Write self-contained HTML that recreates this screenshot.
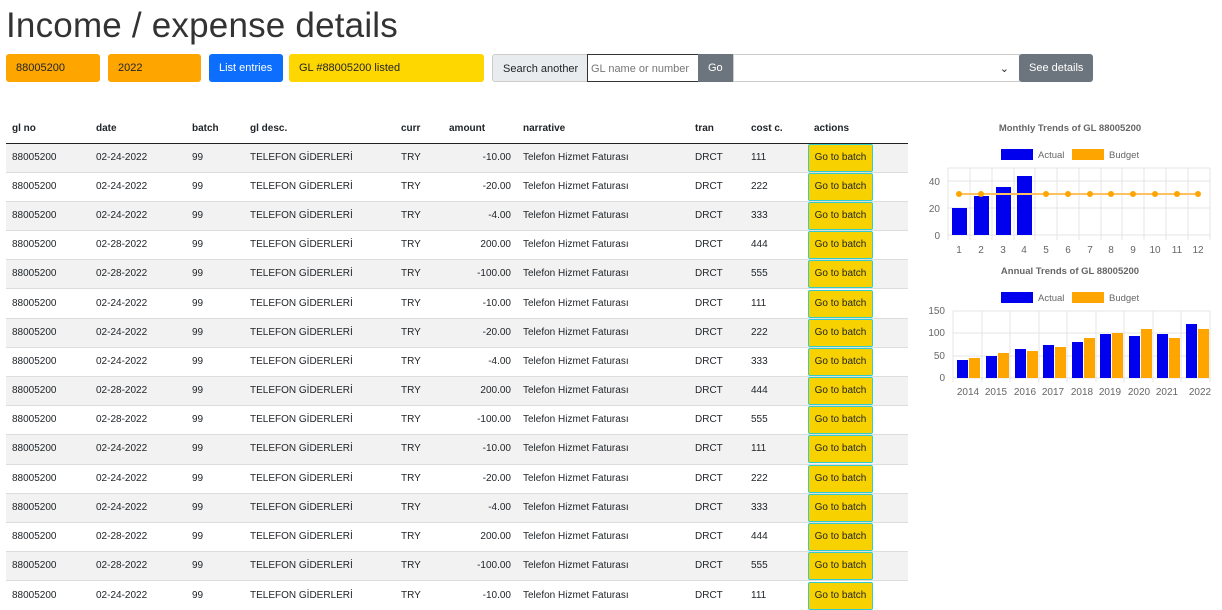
<!DOCTYPE html>
<html><head><meta charset="utf-8"><style>
*{box-sizing:border-box;margin:0;padding:0}
body{width:1222px;height:606px;overflow:hidden;background:#fff;font-family:"Liberation Sans",sans-serif;color:#212529;position:relative}
.a{position:absolute}
h1{position:absolute;left:6px;top:6px;font-size:35px;font-weight:300;color:#333;letter-spacing:0.2px}
.box{position:absolute;top:54px;height:28px;font-size:11px;line-height:28px;padding-left:10px;border-radius:3px}
table{position:absolute;left:6px;top:115px;width:902px;border-collapse:collapse;font-size:10px;line-height:12px}
th{text-align:left;font-weight:bold;height:28px;padding:0 0 0 6px;border-bottom:1.5px solid #222;font-size:10px}
td{height:29.2px;padding:0 0 0 6px;border-top:1px solid #ddd;vertical-align:middle}
tr:nth-child(odd) td{background:#f2f2f2}
td.r{text-align:right;padding-right:6px}
.btn{display:block;width:65px;height:28px;background:#f7d100;border:1px solid #3cc;border-radius:2px;line-height:26px;text-align:center;font-size:10px;margin-left:-6px}
</style></head><body>
<h1>Income / expense details</h1>
<div class="box" style="left:6px;width:94px;background:#ffa500">88005200</div>
<div class="box" style="left:108px;width:93px;background:#ffa500">2022</div>
<div class="box" style="left:209px;width:74px;background:#0d6efd;color:#fff;padding-left:10px">List entries</div>
<div class="box" style="left:289px;width:195px;background:#ffd700">GL #88005200 listed</div>
<div class="box" style="left:492px;width:96px;background:#e9ecef;border:1px solid #ccc;border-radius:3px 0 0 3px">Search another</div>
<div class="box" style="left:587px;width:112px;background:#fff;border:1px solid #333;border-radius:0;color:#777;padding-left:3px">GL name or number</div>
<div class="box" style="left:698px;width:35px;background:#6c757d;color:#fff;border-radius:0;padding-left:10px">Go</div>
<div class="box" style="left:733px;width:287px;background:#fff;border:1px solid #ccc;border-radius:0"><span style="position:absolute;right:10px;top:0;font-size:11px">&#8964;</span></div>
<div class="box" style="left:1019px;width:74px;background:#6c757d;color:#fff;padding-left:10px">See details</div>

<table>
<tr><th style="width:84px">gl no</th><th style="width:96px">date</th><th style="width:58px">batch</th><th style="width:151px">gl desc.</th><th style="width:48px">curr</th><th style="width:74px">amount</th><th style="width:172px">narrative</th><th style="width:56px">tran</th><th style="width:63px">cost c.</th><th>actions</th></tr>
</table>

<svg class="a" style="left:910px;top:110px" width="312" height="300" font-family="Liberation Sans,sans-serif" font-size="10" fill="#666">
<text x="160" y="21" text-anchor="middle" font-weight="bold" font-size="9.5">Monthly Trends of GL 88005200</text>
<rect x="91" y="39" width="32" height="11" fill="#0000ee"/><text x="128" y="48" font-size="9.5">Actual</text>
<rect x="162" y="39" width="32" height="11" fill="#ffa500"/><text x="199" y="48" font-size="9.5">Budget</text>
<g stroke="#e4e4e4" stroke-width="1">
<line x1="38" y1="58" x2="300" y2="58"/><line x1="38" y1="71" x2="300" y2="71"/><line x1="38" y1="98" x2="300" y2="98"/><line x1="38" y1="125" x2="300" y2="125"/>
<line x1="38" y1="58" x2="38" y2="130"/><line x1="60" y1="58" x2="60" y2="130"/><line x1="82" y1="58" x2="82" y2="130"/><line x1="104" y1="58" x2="104" y2="130"/><line x1="125" y1="58" x2="125" y2="130"/><line x1="147" y1="58" x2="147" y2="130"/><line x1="169" y1="58" x2="169" y2="130"/><line x1="191" y1="58" x2="191" y2="130"/><line x1="212" y1="58" x2="212" y2="130"/><line x1="234" y1="58" x2="234" y2="130"/><line x1="256" y1="58" x2="256" y2="130"/><line x1="278" y1="58" x2="278" y2="130"/><line x1="300" y1="58" x2="300" y2="130"/>
</g>
<rect x="42" y="98" width="15" height="27" fill="#0000ee"/>
<rect x="64" y="86" width="15" height="39" fill="#0000ee"/>
<rect x="86" y="77" width="15" height="48" fill="#0000ee"/>
<rect x="107" y="66" width="15" height="59" fill="#0000ee"/>
<polyline points="49,84 71,84 93,84 114,84 136,84 158,84 180,84 201,84 223,84 245,84 267,84 288,84" fill="none" stroke="#ffc060" stroke-width="2"/>
<g fill="#ffa500"><circle cx="49" cy="84" r="3"/><circle cx="71" cy="84" r="3"/><circle cx="136" cy="84" r="3"/><circle cx="158" cy="84" r="3"/><circle cx="180" cy="84" r="3"/><circle cx="201" cy="84" r="3"/><circle cx="223" cy="84" r="3"/><circle cx="245" cy="84" r="3"/><circle cx="267" cy="84" r="3"/><circle cx="288" cy="84" r="3"/></g>
<g text-anchor="end"><text x="30" y="75">40</text><text x="30" y="102">20</text><text x="30" y="129">0</text></g>
<g text-anchor="middle"><text x="49" y="143">1</text><text x="71" y="143">2</text><text x="93" y="143">3</text><text x="114" y="143">4</text><text x="136" y="143">5</text><text x="158" y="143">6</text><text x="180" y="143">7</text><text x="201" y="143">8</text><text x="223" y="143">9</text><text x="245" y="143">10</text><text x="267" y="143">11</text><text x="288" y="143">12</text></g>
<text x="160" y="164" text-anchor="middle" font-weight="bold" font-size="9.5">Annual Trends of GL 88005200</text>
<rect x="91" y="182" width="32" height="11" fill="#0000ee"/><text x="128" y="191" font-size="9.5">Actual</text>
<rect x="162" y="182" width="32" height="11" fill="#ffa500"/><text x="199" y="191" font-size="9.5">Budget</text>
<g stroke="#e4e4e4"><line x1="43" y1="201" x2="300" y2="201"/><line x1="43" y1="223" x2="300" y2="223"/><line x1="43" y1="246" x2="300" y2="246"/><line x1="43" y1="268" x2="300" y2="268"/>
<line x1="43" y1="201" x2="43" y2="272"/><line x1="72" y1="201" x2="72" y2="272"/><line x1="100" y1="201" x2="100" y2="272"/><line x1="129" y1="201" x2="129" y2="272"/><line x1="157" y1="201" x2="157" y2="272"/><line x1="186" y1="201" x2="186" y2="272"/><line x1="214" y1="201" x2="214" y2="272"/><line x1="243" y1="201" x2="243" y2="272"/><line x1="271" y1="201" x2="271" y2="272"/><line x1="300" y1="201" x2="300" y2="272"/></g>
<g fill="#0000ee"><rect x="47" y="250" width="11" height="18"/><rect x="76" y="246" width="11" height="22"/><rect x="105" y="239" width="11" height="29"/><rect x="133" y="235" width="11" height="33"/><rect x="162" y="232" width="11" height="36"/><rect x="190" y="224" width="11" height="44"/><rect x="219" y="226" width="11" height="42"/><rect x="247" y="224" width="11" height="44"/><rect x="276" y="214" width="11" height="54"/></g>
<g fill="#ffa500"><rect x="59" y="248" width="11" height="20"/><rect x="88" y="243" width="11" height="25"/><rect x="117" y="241" width="11" height="27"/><rect x="145" y="237" width="11" height="31"/><rect x="174" y="228" width="11" height="40"/><rect x="202" y="223" width="11" height="45"/><rect x="231" y="219" width="11" height="49"/><rect x="259" y="228" width="11" height="40"/><rect x="288" y="219" width="11" height="49"/></g>
<g text-anchor="end"><text x="35" y="204">150</text><text x="35" y="226">100</text><text x="35" y="249">50</text><text x="35" y="271">0</text></g>
<g text-anchor="middle"><text x="58" y="285">2014</text><text x="86" y="285">2015</text><text x="115" y="285">2016</text><text x="143" y="285">2017</text><text x="172" y="285">2018</text><text x="200" y="285">2019</text><text x="229" y="285">2020</text><text x="257" y="285">2021</text><text x="290" y="285">2022</text></g>
</svg>
<script>
var d=[["02-24-2022","-10.00","111"],["02-24-2022","-20.00","222"],["02-24-2022","-4.00","333"],["02-28-2022","200.00","444"],["02-28-2022","-100.00","555"]];
var t=document.querySelector('table'),h='';
for(var i=0;i<16;i++){var r=d[i%5];h+='<tr><td>88005200</td><td>'+r[0]+'</td><td>99</td><td>TELEFON GİDERLERİ</td><td>TRY</td><td class="r">'+r[1]+'</td><td>Telefon Hizmet Faturası</td><td>DRCT</td><td>'+r[2]+'</td><td><span class="btn">Go to batch</span></td></tr>';}
t.insertAdjacentHTML('beforeend',h);
</script>
</body></html>
